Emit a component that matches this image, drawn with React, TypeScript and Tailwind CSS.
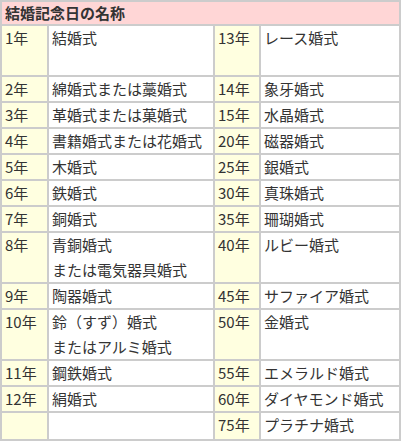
const rows: { y1: string; n1: string[]; y2: string; n2: string[]; h: string }[] = [
  { y1: "1年", n1: ["結婚式"], y2: "13年", n2: ["レース婚式"], h: "h-[49px]" },
  { y1: "2年", n1: ["綿婚式または藁婚式"], y2: "14年", n2: ["象牙婚式"], h: "h-[24px]" },
  { y1: "3年", n1: ["革婚式または菓婚式"], y2: "15年", n2: ["水晶婚式"], h: "h-[24px]" },
  { y1: "4年", n1: ["書籍婚式または花婚式"], y2: "20年", n2: ["磁器婚式"], h: "h-[24px]" },
  { y1: "5年", n1: ["木婚式"], y2: "25年", n2: ["銀婚式"], h: "h-[24px]" },
  { y1: "6年", n1: ["鉄婚式"], y2: "30年", n2: ["真珠婚式"], h: "h-[24px]" },
  { y1: "7年", n1: ["銅婚式"], y2: "35年", n2: ["珊瑚婚式"], h: "h-[24px]" },
  { y1: "8年", n1: ["青銅婚式", "または電気器具婚式"], y2: "40年", n2: ["ルビー婚式"], h: "h-[49px]" },
  { y1: "9年", n1: ["陶器婚式"], y2: "45年", n2: ["サファイア婚式"], h: "h-[24px]" },
  { y1: "10年", n1: ["鈴（すず）婚式", "またはアルミ婚式"], y2: "50年", n2: ["金婚式"], h: "h-[49px]" },
  { y1: "11年", n1: ["鋼鉄婚式"], y2: "55年", n2: ["エメラルド婚式"], h: "h-[24px]" },
  { y1: "12年", n1: ["絹婚式"], y2: "60年", n2: ["ダイヤモンド婚式"], h: "h-[24px]" },
  { y1: "", n1: [], y2: "75年", n2: ["プラチナ婚式"], h: "h-[26px]" },
];

export default function App() {
  return (
    <div className="w-[401px] h-[441px] bg-white overflow-hidden">
      <table
        className="w-[401px] table-fixed border-separate bg-[#cccccc] text-[15px] text-[#333333] leading-[24px]"
        style={{ fontFamily: '"Noto Sans CJK JP", "Noto Sans", sans-serif', borderSpacing: "2px" }}
      >
        <colgroup>
          <col className="w-[45px]" />
          <col className="w-[164px]" />
          <col className="w-[44px]" />
          <col className="w-[138px]" />
        </colgroup>
        <tbody>
          <tr className="h-[22px]">
            <th colSpan={4} className="bg-[#ffd6d6] text-left font-bold px-[3px] py-0 h-[22px] leading-[22px]">
              結婚記念日の名称
            </th>
          </tr>
          {rows.map((r, i) => (
            <tr key={i}>
              <td className={`bg-[#ffffe0] align-top px-[3px] py-0 ${r.h}`}>
                <div className="h-[24px] leading-[24px]">{r.y1}</div>
              </td>
              <td className="bg-white align-top px-[3px] py-0 whitespace-nowrap">
                {r.n1.map((t, j) => (
                  <div key={t} className={j === 0 ? "h-[24px] leading-[24px]" : "h-[25px] leading-[26px]"}>
                    {t}
                  </div>
                ))}
              </td>
              <td className="bg-[#ffffe0] align-top px-[3px] py-0">
                <div className="h-[24px] leading-[24px]">{r.y2}</div>
              </td>
              <td className="bg-white align-top px-[3px] py-0 whitespace-nowrap">
                {r.n2.map((t) => (
                  <div key={t} className="h-[24px] leading-[24px]">{t}</div>
                ))}
              </td>
            </tr>
          ))}
        </tbody>
      </table>
    </div>
  );
}
